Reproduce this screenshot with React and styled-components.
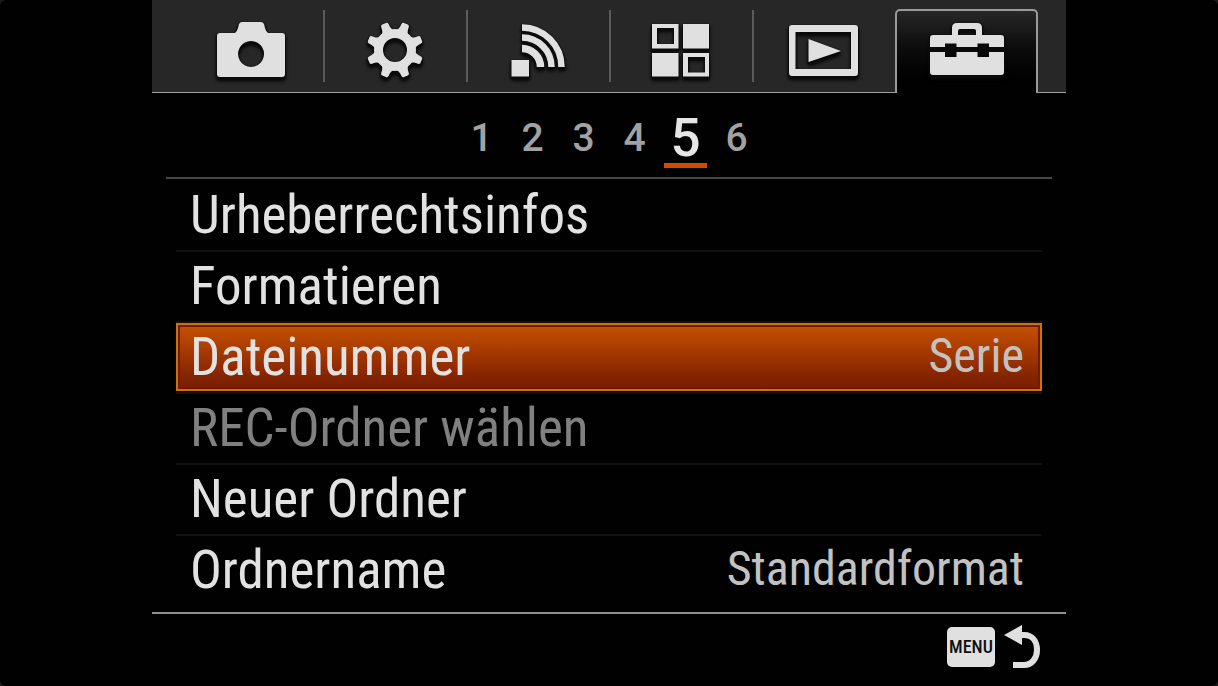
import React from "react";
import styled, { createGlobalStyle, css } from "styled-components";

const GlobalStyle = createGlobalStyle`
  * { box-sizing: border-box; }
  body { margin: 0; background: #1c1c1c; }
  button { appearance: none; border: 0; margin: 0; padding: 0; background: none; font: inherit; color: inherit; cursor: pointer; }
  ul, ol { list-style: none; margin: 0; padding: 0; }
`;

const Screen = styled.main`
  min-height: 100vh;
  padding: 0 152px;
  border-radius: 6px;
  background: #010101;
  color: #e2e2e2;
  font-family: "Roboto Condensed", "Liberation Sans Narrow", Roboto, sans-serif;
`;

const TabBar = styled.nav`
  display: flex;
  height: 93px;
  padding: 0 28px;
  background: #272727;
  border-bottom: 1px solid #a0a0a0;
`;

const Tab = styled.button`
  flex: 1;
  display: flex;
  justify-content: center;
  margin: 10px 0;
  padding-top: 6px;
  border-left: 2px solid ${(p) => (p.$divider ? "#5a5a5a" : "transparent")};
  border-right: 2px solid transparent;

  ${(p) =>
    p.$active &&
    css`
      margin: 9px 0 -1px;
      border: 2px solid #9a9a9a;
      border-bottom: 0;
      border-radius: 5px 5px 0 0;
      padding-top: 5px;
      background: linear-gradient(#272727, #0c0c0c 45%, #010101 80%);
    `}
`;

const TabIcon = styled.svg`
  flex: none;
  width: 83px;
  height: 70px;
  fill: #e0e0e0;
  filter: drop-shadow(0 2px 1px #0b0b0b) drop-shadow(0 1px 1px #0b0b0b)
    drop-shadow(0 1px 1px #0b0b0b);
`;

const Pages = styled.ol`
  display: flex;
  justify-content: center;
  height: 86px;
  margin: 0 14px;
  border-bottom: 2px solid #464646;
  font-family: Roboto, "Liberation Sans", sans-serif;
  font-weight: 500;
`;

const Page = styled.li`
  display: flex;
  width: 51px;
`;

const PageButton = styled.button`
  flex: 1;
  height: 59px;
  margin: 16px 4px 0;
  font-size: ${(p) => (p.$active ? 53 : 39)}px;
  line-height: 58px;
  color: ${(p) => (p.$active ? "#e6e6e6" : "#a2a2a2")};
  border-bottom: 5px solid ${(p) => (p.$active ? "#d44a00" : "transparent")};
`;

const Menu = styled.ul`
  margin: 2px 24px 0;
`;

const Item = styled.li`
  height: 71px;
  padding-bottom: 2px;
  border-bottom: ${(p) => (p.$last ? 0 : 2)}px solid #101010;
`;

const ItemButton = styled.button`
  display: flex;
  justify-content: space-between;
  width: 100%;
  height: 68px;
  padding: 0 16px 0 12px;
  border: 2px solid transparent;
  line-height: 65px;
  text-align: left;
  color: ${(p) => (p.disabled ? "#808080" : "#e2e2e2")};

  ${(p) =>
    p.$selected &&
    css`
      border-color: #cf7200;
      background: linear-gradient(#c45200, #a83a00 40%, #842400 80%, #7a1e00);
      box-shadow: inset 0 0 0 2px #6e1a00;
    `}
`;

const Label = styled.span`
  font-size: 53px;
`;

const Value = styled.span`
  font-size: 48px;
  line-height: 61px;
  color: #c2c2c2;
`;

const Footer = styled.footer`
  display: flex;
  justify-content: flex-end;
  margin-top: 5px;
  padding: 10px 26px 16px;
  border-top: 2px solid #909090;
`;

const BackButton = styled.button`
  display: flex;
  align-items: center;
  gap: 9px;
`;

const MenuKey = styled.span`
  width: 48px;
  height: 40px;
  border-radius: 5px;
  background: #e0e0e0;
  color: #101010;
  font-size: 18px;
  font-weight: 500;
  line-height: 40px;
  text-align: center;
`;

const BackArrow = styled.svg`
  width: 36px;
  height: 46px;
`;

const icons = {
  Kamera: (
    <path
      fillRule="evenodd"
      d="M10 17H25Q27 16 28 12L29 8Q30 6 32 6H51Q53 6 54 8L55 12Q56 16 58 17H72Q75 17 75 20V58Q75 61 72 61H10Q7 61 7 58V20Q7 17 10 17ZM41 25a13 13 0 1 0 .1 0Z"
    />
  ),
  Einstellungen: (
    <g transform="translate(42 34)">
      <circle r="16.5" fill="none" stroke="#e0e0e0" strokeWidth="9" />
      {[22.5, 67.5, 112.5, 157.5, 202.5, 247.5, 292.5, 337.5].map((a) => (
        <path
          key={a}
          transform={`rotate(${a})`}
          d="M-7 -18Q-4.500 -21 -4.200 -23.500L-4 -26.500Q-3.700 -28.500 -2 -28.500H2Q3.700 -28.500 4 -26.500L4.200 -23.500Q4.500 -21 7 -18Z"
        />
      ))}
    </g>
  ),
  Drahtlos: (
    <>
      <rect x="15.500" y="44" width="17.500" height="16.500" />
      <g fill="none" stroke="#e0e0e0" strokeWidth="6.500">
        <path d="M26 11.500A39.500 39.500 0 0 1 65.500 51" />
        <path d="M26 21.500A29.500 29.500 0 0 1 55.500 51" />
        <path d="M26 32.500A18.500 18.500 0 0 1 44.500 51" strokeWidth="7.500" />
      </g>
    </>
  ),
  Applikation: (
    <path
      fillRule="evenodd"
      d="M13 8H39.500V32.500H13ZM18 12V28H35V12ZM44 8H70V32.500H44ZM13 37H39.500V60.500H13ZM44 37H70V60.500H44ZM49 41V56.500H66V41Z"
    />
  ),
  Wiedergabe: (
    <path
      fillRule="evenodd"
      d="M10 9H73Q76 9 76 12V57Q76 60 73 60H10Q7 60 7 57V12Q7 9 10 9ZM13.500 16V53H69V16ZM26.500 23L59 35L26.500 46Z"
    />
  ),
  Setup: (
    <>
      <path
        fillRule="evenodd"
        d="M8 19H27V12Q27 7 32 7H52Q57 7 57 12V19H76Q79 19 79 22V31H64V27.500H52.500V31H31.500V27.500H20V31H5V22Q5 19 8 19ZM35 13Q33 13 33 15V19H51V15Q51 13 49 13Z"
      />
      <path d="M5 36H20V41H31.500V36H52.500V41H64V36H79V56Q79 59 76 59H8Q5 59 5 56Z" />
    </>
  ),
};

const items = [
  { label: "Urheberrechtsinfos" },
  { label: "Formatieren" },
  { label: "Dateinummer", value: "Serie", selected: true },
  { label: "REC-Ordner wählen", disabled: true },
  { label: "Neuer Ordner" },
  { label: "Ordnername", value: "Standardformat" },
];

export default function App() {
  const tabs = Object.entries(icons);
  return (
    <>
      <GlobalStyle />
      <Screen>
        <TabBar>
          {tabs.map(([name, icon], i) => (
            <Tab
              key={name}
              type="button"
              aria-label={name}
              $active={name === "Setup"}
              $divider={i > 0}
            >
              <TabIcon viewBox="0 0 83 70" aria-hidden="true">
                {icon}
              </TabIcon>
            </Tab>
          ))}
        </TabBar>
        <Pages>
          {[1, 2, 3, 4, 5, 6].map((n) => (
            <Page key={n}>
              <PageButton type="button" $active={n === 5}>
                {n}
              </PageButton>
            </Page>
          ))}
        </Pages>
        <Menu>
          {items.map((item, i) => (
            <Item key={item.label} $last={i === items.length - 1}>
              <ItemButton
                type="button"
                disabled={item.disabled}
                $selected={item.selected}
              >
                <Label>{item.label}</Label>
                {item.value && <Value>{item.value}</Value>}
              </ItemButton>
            </Item>
          ))}
        </Menu>
        <Footer>
          <BackButton type="button" aria-label="MENU zurück">
            <MenuKey>MENU</MenuKey>
            <BackArrow viewBox="0 0 36 46" aria-hidden="true">
              <path d="M0 11L18 1V21Z" fill="#e0e0e0" />
              <path
                d="M16 11H20C29 11 33 18 33 26C33 34 28 41 20 41H9"
                fill="none"
                stroke="#e0e0e0"
                strokeWidth="6"
              />
            </BackArrow>
          </BackButton>
        </Footer>
      </Screen>
    </>
  );
}
